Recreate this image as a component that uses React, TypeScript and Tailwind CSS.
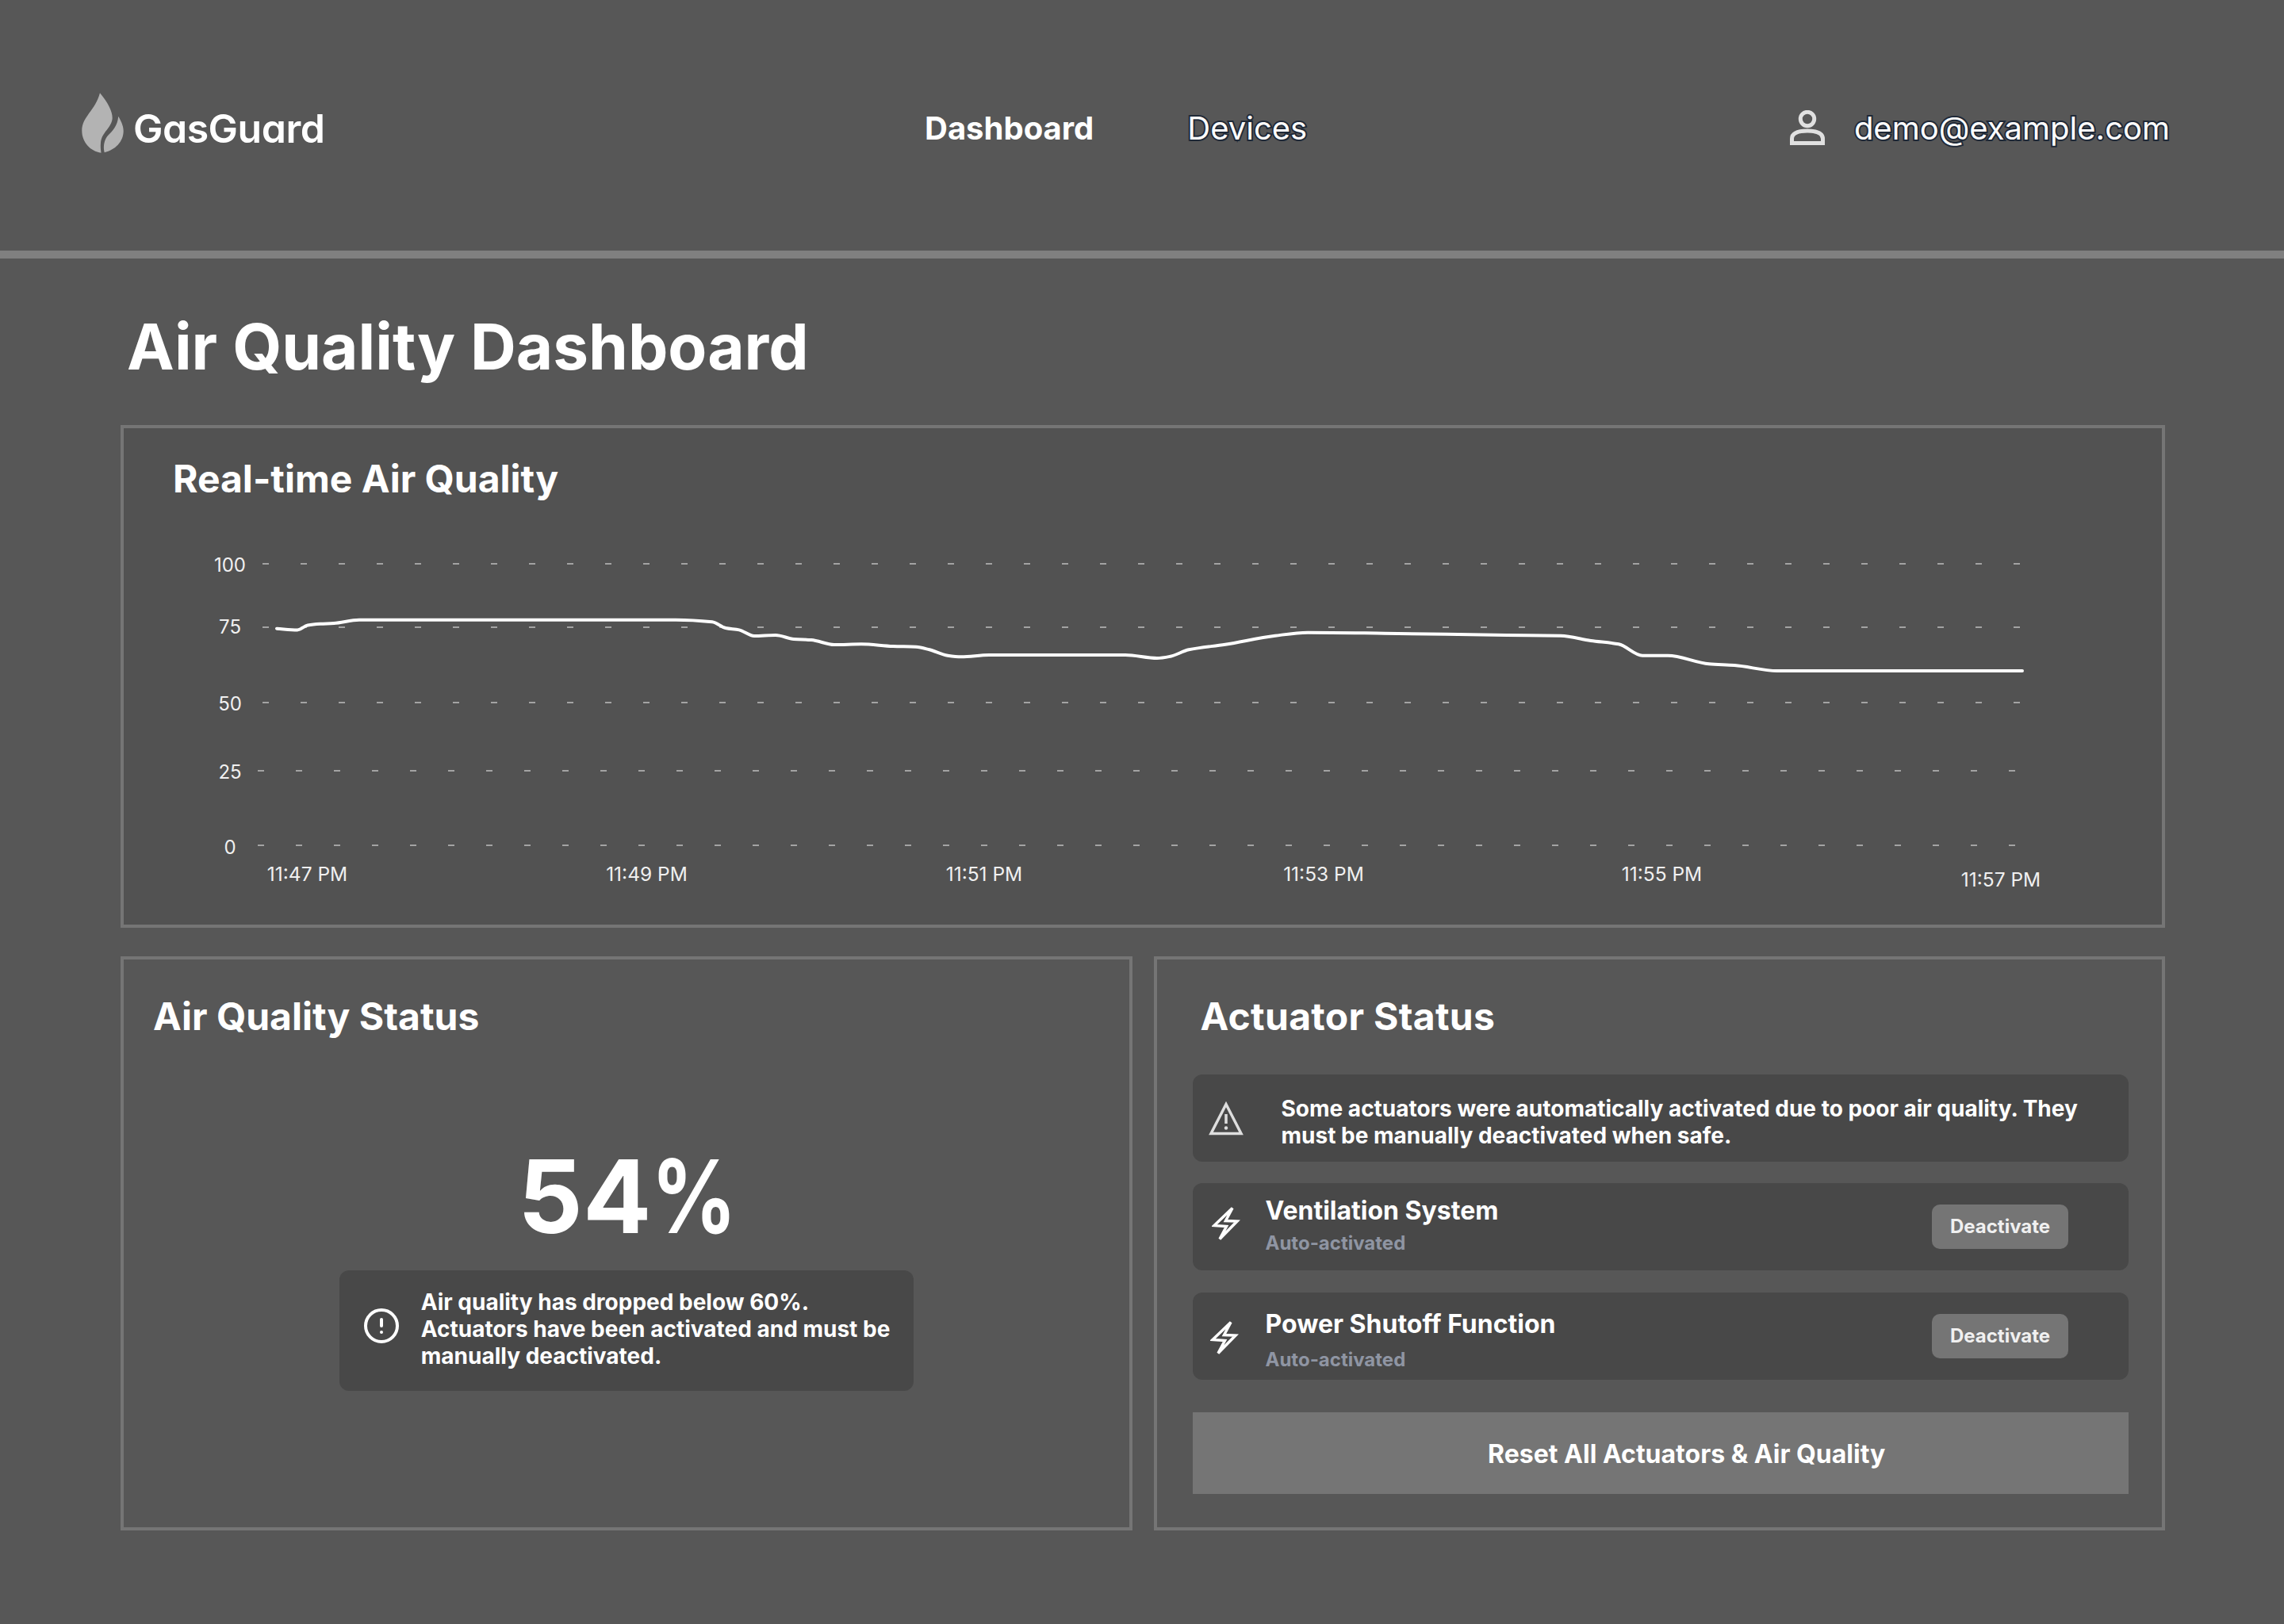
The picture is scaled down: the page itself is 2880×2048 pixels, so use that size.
import { CircleAlert } from "lucide-react";

// line samples in page px, read off the screenshot
const samples: [number, number][] = [
  [349, 792.7], [375, 794.4], [388, 788.5], [404, 786.8], [421, 786], [453, 781.8], [852, 781.8], [898, 784.3],
  [915, 792], [932, 794.4], [951, 802], [978, 801], [1001, 806], [1023, 807], [1052, 813], [1086, 812.3],
  [1126, 815], [1155, 815.7], [1172, 819.3], [1195, 826.7], [1212, 828.3], [1247, 826], [1419, 826], [1459, 830],
  [1476, 827.7], [1499, 819.3], [1545, 812.7], [1608, 801.7], [1649, 797.7], [1746, 798.7], [1900, 801], [1968, 801.7],
  [2006, 808], [2041, 812.3], [2071, 826.7], [2103, 826.7], [2155, 837.3], [2187, 839], [2241, 846], [2550, 846],
];

// monotone curve, same idea as the chart lib's "monotone" line
function smoothPath(pts: [number, number][]) {
  const slopes = pts.slice(1).map((p, i) => (p[1] - pts[i][1]) / (p[0] - pts[i][0]));
  const m = pts.map((_, i) => {
    if (i === 0) return slopes[0];
    if (i === pts.length - 1) return slopes[slopes.length - 1];
    const a = slopes[i - 1];
    const b = slopes[i];
    return a * b <= 0 ? 0 : (2 * a * b) / (a + b);
  });
  let d = `M${pts[0][0]} ${pts[0][1]}`;
  for (let i = 0; i < pts.length - 1; i++) {
    const h = (pts[i + 1][0] - pts[i][0]) / 3;
    d += ` C${pts[i][0] + h} ${pts[i][1] + m[i] * h} ${pts[i + 1][0] - h} ${pts[i + 1][1] - m[i + 1] * h} ${pts[i + 1][0]} ${pts[i + 1][1]}`;
  }
  return d;
}

function Flame() {
  return (
    <svg width="53" height="76" viewBox="13 12 53 76" fill="#b3b3b3" className="-mt-[6px] shrink-0">
      <path d="M36 12.3C46 24 52 36 51.7 44C51 56 38 62 37 75C36.5 80 37 84 37.5 87.7C24 86 13.3 74 13.3 60C13.3 42 30 35 36 12.3Z" />
      <path d="M59.3 41.7C64 50 65.7 55 65.7 60C65.7 74 55 84 41.7 87.3C40 80 41 72 46 66C52 60 58 54 59.3 41.7Z" />
    </svg>
  );
}

function UserIcon() {
  return (
    <svg width="44" height="44" viewBox="0 0 44 44" fill="none" stroke="#e0e0e0" strokeWidth="5" className="-mt-[2px]">
      <circle cx="22" cy="11" r="8.7" />
      <path d="M2.5 41.5V36C2.5 28 12 26 22 26C32 26 41.5 28 41.5 36V41.5Z" />
    </svg>
  );
}

function WarnIcon() {
  return (
    <svg width="44" height="44" viewBox="0 0 44 44" fill="none" stroke="#dedede" strokeWidth="3.5" className="shrink-0">
      <path d="M22 4.5L3 41.5H41Z" />
      <path d="M22 17V29" strokeWidth="3.5" />
      <circle cx="22" cy="34.5" r="2.2" fill="#dedede" stroke="none" />
    </svg>
  );
}

function ZapIcon({ className }: { className: string }) {
  return (
    <svg width="36" height="46" viewBox="0 0 36 46" fill="none" stroke="#fff" strokeWidth="3.5" className={className}>
      <path d="M26 3.5L17.5 19.5L32 20L10 42.5L18.5 26.5L3 25.5Z" />
    </svg>
  );
}

function Chart() {
  const rows = [
    { y: 711, x1: 331, x2: 2547, label: "100", ly: 712 },
    { y: 791, x1: 331, x2: 2547, label: "75", ly: 790 },
    { y: 886, x1: 331, x2: 2547, label: "50", ly: 887 },
    { y: 972, x1: 325, x2: 2541, label: "25", ly: 973 },
    { y: 1066, x1: 325, x2: 2541, label: "0", ly: 1068 },
  ];
  const times = [
    { t: "11:47 PM", x: 387.5, y: 1102 },
    { t: "11:49 PM", x: 815.5, y: 1102 },
    { t: "11:51 PM", x: 1241, y: 1102 },
    { t: "11:53 PM", x: 1669, y: 1102 },
    { t: "11:55 PM", x: 2095.5, y: 1102 },
    { t: "11:57 PM", x: 2523, y: 1109 },
  ];
  return (
    <svg viewBox="156 680 2570 450" className="mt-[46px] block h-[450px] w-[2570px]">
      {rows.map((r) => (
        <g key={r.label}>
          <line x1={r.x1} x2={r.x2} y1={r.y} y2={r.y} stroke="#a3a3a3" strokeWidth="2" strokeDasharray="8 40" />
          <text x="290" y={r.ly} fill="#f0f0f0" fontSize="24" textAnchor="middle" dominantBaseline="central">
            {r.label}
          </text>
        </g>
      ))}
      {times.map((t) => (
        <text key={t.t} x={t.x} y={t.y} fill="#f0f0f0" fontSize="24.5" textAnchor="middle" dominantBaseline="central">
          {t.t}
        </text>
      ))}
      <path d={smoothPath(samples)} fill="none" stroke="#fff" strokeWidth="4" strokeLinecap="round" />
    </svg>
  );
}

function DeactivateButton() {
  return (
    <button className="mr-[76px] ml-auto h-[56px] w-[172px] rounded-[10px] bg-[#757575] text-[24px] font-bold text-[#f0f0f0]">
      Deactivate
    </button>
  );
}

export default function App() {
  return (
    <div className="min-h-[2048px] w-[2880px] bg-[#575757] text-white [font-family:Inter,sans-serif]">
      <header className="flex h-[326px] items-center border-b-[10px] border-[#808080] pr-[144px] pl-[103px]">
        <div className="flex w-[305px] items-center gap-[12px]">
          <Flame />
          <span className="mt-[8px] text-[50px] leading-none font-semibold tracking-[-0.5px] [font-feature-settings:'cv11']">
            GasGuard
          </span>
        </div>
        <nav className="mt-[8px] ml-[758px] flex items-center gap-[118px] text-[40px] leading-none">
          <a className="font-bold">Dashboard</a>
          <a className="[-webkit-text-stroke:4px_#1f2937] [paint-order:stroke_fill]">Devices</a>
        </nav>
        <div className="mt-[8px] ml-auto flex items-center gap-[37px]">
          <UserIcon />
          <span className="text-[40px] leading-none [-webkit-text-stroke:4px_#1f2937] [paint-order:stroke_fill]">
            demo@example.com
          </span>
        </div>
      </header>

      <main className="pr-[150px] pl-[152px]">
        <h1 className="pt-[71px] pl-2 text-[80px] leading-[80px] font-bold">Air Quality Dashboard</h1>

        <section className="mt-[59px] h-[634px] border-4 border-[#757575] bg-[#525252]">
          <h2 className="pt-[34px] pl-[62px] text-[48px] leading-[60px] font-bold">Real-time Air Quality</h2>
          <Chart />
        </section>

        <div className="mt-[36px] grid grid-cols-2 gap-[27px]">
          <section className="h-[724px] border-4 border-[#757575] pt-[42px]">
            <h2 className="pl-[37px] text-[48px] leading-[60px] font-bold">Air Quality Status</h2>
            <div className="mt-[127px] flex justify-center pr-[9px] text-[128px] leading-[140px] font-bold">
              <span>54</span>
              {/* the % in the picture is narrower than Inter's */}
              <span className="inline-block w-[96px] origin-left scale-x-[0.83]">%</span>
            </div>
            <div className="mx-auto mt-[23px] flex h-[152px] w-[724px] items-center gap-[26px] rounded-[12px] bg-[#484848] pb-[4px] pl-[29px]">
              <CircleAlert size={48} className="-mt-[8px] shrink-0" />
              <p className="w-[610px] text-[28px] leading-[34px] font-bold">
                Air quality has dropped below 60%. Actuators have been activated and must be manually deactivated.
              </p>
            </div>
          </section>

          <section className="h-[724px] border-4 border-[#757575] pt-[42px] pr-[42px] pl-[45px]">
            <h2 className="pl-[10px] text-[48px] leading-[60px] font-bold tracking-[0.3px]">Actuator Status</h2>
            <div className="mt-[43px] flex h-[110px] items-center gap-[48px] rounded-[12px] bg-[#484848] pl-[20px]">
              <WarnIcon />
              <p className="mt-[10px] w-[1040px] text-[28px] leading-[34px] font-bold">
                Some actuators were automatically activated due to poor air quality. They must be manually deactivated
                when safe.
              </p>
            </div>
            <div className="mt-[27px] flex h-[110px] items-center rounded-[12px] bg-[#484848] pl-[24px]">
              <ZapIcon className="mt-[28px] self-start" />
              <div className="ml-[32px] flex flex-col gap-[6px] self-start pt-[15px]">
                <span className="text-[32px] leading-[40px] font-bold">Ventilation System</span>
                <span className="text-[24px] leading-[30px] font-bold text-[#8f95a3]">Auto-activated</span>
              </div>
              <DeactivateButton />
            </div>
            <div className="mt-[28px] flex h-[110px] items-center rounded-[12px] bg-[#484848] pl-[22px]">
              <ZapIcon className="mt-[34px] self-start" />
              <div className="ml-[34px] flex flex-col gap-[10px] self-start pt-[20px]">
                <span className="text-[32px] leading-[40px] font-bold">Power Shutoff Function</span>
                <span className="text-[24px] leading-[30px] font-bold text-[#8f95a3]">Auto-activated</span>
              </div>
              <DeactivateButton />
            </div>
            <button className="mt-[41px] h-[103px] w-full bg-[#757575] pt-[2px] pl-[66px] text-[32px] font-bold">
              Reset All Actuators &amp; Air Quality
            </button>
          </section>
        </div>
      </main>
    </div>
  );
}
